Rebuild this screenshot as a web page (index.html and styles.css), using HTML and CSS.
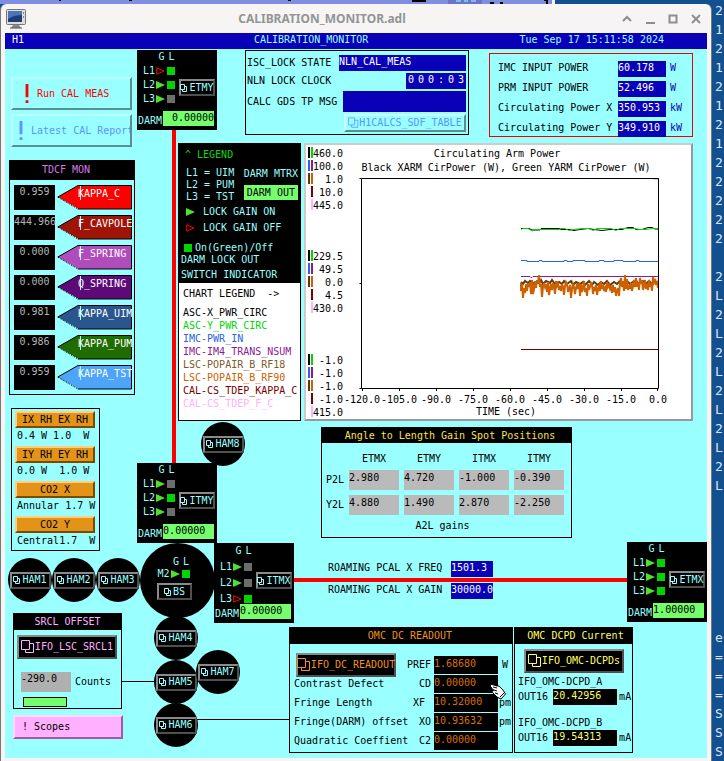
FILE: index.html
```html
<!DOCTYPE html>
<html lang="en">
<head>
<meta charset="utf-8">
<title>CALIBRATION_MONITOR.adl</title>
<link rel="stylesheet" href="styles.css">
</head>
<body>
<svg class="defs" aria-hidden="true">
  <symbol id="rel" viewBox="0 0 8 8"><path d="M.5.5h4v5h-4zM4.5 2.500h2v5h-4v-2" fill="none" stroke="currentColor"/></symbol>
  <symbol id="relbig" viewBox="0 0 14 14"><path d="M.5.5h8v9h-8zM8.500 3.500h4v9h-8v-3" fill="none" stroke="currentColor"/></symbol>
  <symbol id="on" viewBox="0 0 9 8"><path d="M0 0l9 4-9 4z" fill="#50e030"/></symbol>
  <symbol id="off" viewBox="0 0 9 8"><path d="M.7.8L8 4 .7 7.200z" fill="none" stroke="red"/></symbol>
  <symbol id="flag" viewBox="0 0 75 25"><path d="M.8 12L21 .5h53.500v23.500H21z" fill="currentColor" stroke="#000"/><path d="M2 13l19 11" stroke="#9ff" stroke-dasharray="2 1" fill="none"/><path d="M23.500 1v14" stroke="#9ff" stroke-width="1"/></symbol>
  <symbol id="bang" viewBox="0 0 4 20"><path d="M.5 0h3v14h-3zM.5 17h3v3h-3z" fill="currentColor"/></symbol>
</svg>
<div class="desktop">
  <div class="behind"><svg width="555" height="4" viewBox="0 0 555 4"><path d="M448 0h34v4h-34z" fill="#6a74cc"/><path d="M456 1h5M464 1h4M471 1h5" stroke="#99ffff"/><path d="M59 0h2M129 0h3M288 0h3M412 1h14M490 3h4M500 3h3M544 0h3v4" stroke="#000" stroke-width="2" fill="none"/></svg></div>
  <div class="window">
    <header class="titlebar">
      <svg class="app-icon" width="20" height="20" viewBox="0 0 20 20"><rect x=".5" y=".5" width="19" height="15" rx="1" fill="#dcdcd8" stroke="#777"/><rect x="2" y="2" width="14" height="11" fill="#1f3c78"/><path d="M2 2h14v4Q8 6 2 10z" fill="#4d74b4"/><path d="M17.500 3v2M17.500 7v2" stroke="#888"/><path d="M7 16h6l2 3H5z" fill="#888"/><path d="M4 19h12" stroke="#555"/></svg>
      <h1 class="title">CALIBRATION_MONITOR.adl</h1>
      <div class="win-buttons">
        <button aria-label="Shade"><svg width="10" height="10" viewBox="0 0 10 10"><path d="M1 7l4-4 4 4" /></svg></button>
        <button aria-label="Minimize"><svg width="10" height="10" viewBox="0 0 10 10"><path d="M1 9h9"/></svg></button>
        <button aria-label="Maximize"><svg width="10" height="10" viewBox="0 0 10 10"><path d="M1.500 1.500h7v7h-7z"/></svg></button>
        <button aria-label="Close"><svg width="10" height="10" viewBox="0 0 10 10"><path d="M1 1l8 8M9 1l-8 8"/></svg></button>
      </div>
    </header>
    <div class="headline"><span>H1</span><span>CALIBRATION_MONITOR</span><span>Tue Sep 17 15:11:58 2024</span></div>

    <main class="stage">
      <div class="beam beam-y"></div>
      <div class="beam beam-x"></div>
      <div class="wire wire-srcl"></div>
      <div class="wire wire-omc"></div>

      <div class="left">
        <button class="shell run"><svg width="4" height="19"><use href="#bang"/></svg>Run CAL MEAS</button>
        <button class="shell report"><svg width="4" height="19"><use href="#bang"/></svg>Latest CAL Report</button>

        <section class="panel tdcf">
          <h2 class="bar">TDCF MON</h2>
          <div class="kappas">
            <output>0.959</output><button class="flag red"><svg><use href="#flag"/></svg><span>KAPPA_C</span></button>
            <output>444.966</output><button class="flag brick"><svg><use href="#flag"/></svg><span>F_CAVPOLE</span></button>
            <output>0.000</output><button class="flag orchid"><svg><use href="#flag"/></svg><span>F_SPRING</span></button>
            <output>0.000</output><button class="flag violet"><svg><use href="#flag"/></svg><span>Q_SPRING</span></button>
            <output>0.981</output><button class="flag navy"><svg><use href="#flag"/></svg><span>KAPPA_UIM</span></button>
            <output>0.986</output><button class="flag forest"><svg><use href="#flag"/></svg><span>KAPPA_PUM</span></button>
            <output>0.959</output><button class="flag sky"><svg><use href="#flag"/></svg><span>KAPPA_TST</span></button>
          </div>
        </section>

        <section class="panel heaters">
          <button class="amber">IX RH EX RH</button><p>0.4 W 1.0  W</p>
          <button class="amber">IY RH EY RH</button><p>0.0 W  1.0 W</p>
          <button class="amber">CO2 X</button><p>Annular 1.7 W</p>
          <button class="amber">CO2 Y</button><p>Central1.7  W</p>
        </section>

        <section class="panel srcl">
          <h2 class="bar">SRCL OFFSET</h2>
          <button class="rel big pink"><svg><use href="#relbig"/></svg>IFO_LSC_SRCL1</button>
          <label class="offset"><input value="-290.0">Counts</label>
          <div class="meter"></div>
        </section>
        <button class="scopes">! Scopes</button>
      </div>

      <div class="right">
        <div class="row-top">
          <section class="panel lock">
            <span>ISC_LOCK STATE</span><output class="state">NLN_CAL_MEAS</output>
            <span>NLN LOCK CLOCK</span><output class="clock"><i>0</i><i>0</i><i>0</i><i>:</i><i>0</i><i>3</i></output>
            <span>CALC GDS TP MSG</span><output class="msg"></output>
            <button class="sdf"><svg><use href="#relbig"/></svg>H1CALCS_SDF_TABLE</button>
          </section>
          <section class="panel power">
            <span>IMC INPUT POWER</span><output>60.178</output><span class="unit">W</span>
            <span>PRM INPUT POWER</span><output>52.496</output><span class="unit">W</span>
            <span>Circulating Power X</span><output>350.953</output><span class="unit">kW</span>
            <span>Circulating Power Y</span><output>349.910</output><span class="unit">kW</span>
          </section>
        </div>

        <div class="row-chart">
          <section class="panel legend">
            <div class="legend-dark">
              <h2>^ LEGEND</h2>
              <div class="stages">
                <ul><li>L1 = UIM</li><li>L2 = PUM</li><li>L3 = TST</li></ul>
                <div class="darm-buttons"><button>DARM MTRX</button><button class="out">DARM OUT</button></div>
              </div>
              <p class="key"><svg><use href="#on"/></svg> LOCK GAIN ON</p>
              <p class="key"><svg><use href="#off"/></svg> LOCK GAIN OFF</p>
              <p class="switch"><i class="lamp lit"></i>On(Green)/Off</p>
              <p class="note">DARM LOCK OUT</p>
              <p class="note last">SWITCH INDICATOR</p>
            </div>
            <div class="legend-light">
              <h3>CHART LEGEND  -&gt;</h3>
              <ul>
                <li class="c-black">ASC-X_PWR_CIRC</li><li class="c-green">ASC-Y_PWR_CIRC</li><li class="c-blue">IMC-PWR_IN</li><li class="c-purple">IMC-IM4_TRANS_NSUM</li><li class="c-brown">LSC-POPAIR_B_RF18</li><li class="c-orange">LSC-POPAIR_B_RF90</li><li class="c-maroon">CAL-CS_TDEP_KAPPA_C</li><li class="c-pink">CAL-CS_TDEP_F_C</li>
              </ul>
            </div>
          </section>
          <figure class="chart">
            <svg viewBox="0 0 385 274" role="img" aria-label="Circulating Arm Power strip chart">
              <g text-anchor="middle"><text x="191" y="12">Circulating Arm Power</text><text x="200" y="26">Black XARM CirPower (W), Green YARM CirPower (W)</text><text x="200" y="270">TIME (sec)</text></g>
              <defs><clipPath id="plot"><path d="M56 34h297v210H56z"/></clipPath><g id="swatches"><path d="M2 0h2v11h-2z" fill="#000"/><path d="M5 0h2v11h-2z" fill="#00d800"/><path d="M2 13h2v11h-2z" fill="#2a63e4"/><path d="M5 13h2v11h-2z" fill="#8b1a96"/><path d="M2 26h2v11h-2z" fill="#5b3a11"/><path d="M5 26h2v11h-2z" fill="#cd6100"/><path d="M5 39h2v11h-2z" fill="#780000"/><path d="M5 52h2v11h-2z" fill="#ffb0ff"/></g></defs>
              <use href="#swatches" y="2"/><use href="#swatches" y="105"/><use href="#swatches" y="209"/>
              <g text-anchor="end">
                <text x="37" y="12">460.0</text><text x="37" y="25">100.0</text><text x="37" y="38">1.0</text><text x="37" y="51">10.0</text><text x="37" y="64">445.0</text>
                <text x="37" y="115">229.5</text><text x="37" y="128">49.5</text><text x="37" y="141">0.0</text><text x="37" y="154">4.5</text><text x="37" y="167">430.0</text>
                <text x="37" y="219">-1.0</text><text x="37" y="232">-1.0</text><text x="37" y="245">-1.0</text><text x="37" y="258">-1.0</text><text x="37" y="271">415.0</text>
              </g>
              <g text-anchor="middle"><text x="56" y="258">-120.0</text><text x="93" y="258">-105.0</text><text x="130" y="258">-90.0</text><text x="167" y="258">-75.0</text><text x="204" y="258">-60.0</text><text x="241" y="258">-45.0</text><text x="278" y="258">-30.0</text><text x="315" y="258">-15.0</text><text x="352" y="258">0.0</text></g>
              <g fill="none" clip-path="url(#plot)">
                <path d="M347 34.500h5" stroke="#ffb0ff"/>
                <path d="M215 83.500h8l3 1.500h8l1-1.500h18l2 1h8l5 1 6-1 8-1 6 1 8 1 8-1h12l6-2h5l3 2h6l6-2h4l3 1.500h10" stroke="#000"/>
                <path d="M215 84.500l2-1h5l4 2.500 3-1.500h24l2-1h4l4 2 4-1 10-1h6l4 2 4-2h14l5 2 4-2h14l6 1h6l6-1h12" stroke="#00d800"/>
                <path d="M215 115.500h6v1h12v-1h3v1h22v-1h3v1h6v-1h12v1h14v-1h5v1h10v-1h9v1h13v-1h3v1h19" stroke="#2a63e4"/>
                <path d="M215 131.500h9l1 1h1l1-1h125" stroke="#8b1a96"/>
                <path d="M215 137l2 2 2-3 3 2 2-2 3 3 2-2 4 1 2-3 2 4 3-3 4 2 2-3 3 4 4-2 3 2 2-3 3 3 4-3 2 4 3-3 4 2 3-2 2 3 4-4 3 4 2-3 4 3 3-3 3 2 3-3 3 4 4-3 3 2 3-3 3 3 4-3 3 3 3-2 3-1 3 3 4-3 3 3 3-3 3 3" stroke="#5b3a11" stroke-width="2"/>
                <path d="M215 138v8l1-7 1 14 1-10 1 5 1-9 1 7 1-8 1 4 1-5 1 12 1-3v-11l1 14 1-5 1-8 1 7 1-8 1 3 1-8 1 12 1-3 1 13 1-10 1-4 1 4 1-3 1 8 1-10 1 13 1-6 1-5 1 6 1-7 1 3 1 8 1-13 1 5 1-2 1 6 1-4 1 5 1-7 1 3 1 8 1-9 1-4 1 2 1 8 1-3 1-4 1 13 1-9 1-5 1 3 1 7 1-6 1-4 1 5 1-6 1 13 1-12 1 8 1-4 1-7 1 11 1-4 1 8 1-12 1 6 1-3 1-4 1 2 1 9 1-7 1 4 1-6 1 10 1-6 1-3 1 5 1-10 1 8 1-4 1 6 1-3 1 4 1-10 1 5 1-2 1 4 1-2 1 6 1-8 1 7 1-5 1 9 1-5 1-3 1 8 1-13 1-5 1 9 1-6 1 10 1-16 1 14 1-10 1 11 1-5 1 4 1-6 1 8 1-5 1-6 1 7 1-9 1 9 1-5 1 8 1-12 1 6 1-4 1 10 1-4 1-6 1 9 1-5 1 6 1-10 1 7 1-4 1 8 1-14 1 5 1-3 1 6 1-4 1 7 1-11 1 9" stroke="#cd6100" stroke-width="2"/>
                <path d="M215 204.500h137" stroke="#780000"/>
              </g>
              <path d="M55.500 33.500h297v210h-297zM53.500 33.500h2M53.500 138.500h2M53.500 243.500h2M56.500 243v3M93.500 243v3M130.500 243v3M167.500 243v3M204.500 243v3M241.500 243v3M278.500 243v3M315.500 243v3M351.500 243v3" stroke="#000" fill="none"/>
            </svg>
          </figure>
        </div>

        <section class="panel a2l">
          <h2 class="bar">Angle to Length Gain Spot Positions</h2>
          <table>
            <tr><td></td><th>ETMX</th><th>ETMY</th><th>ITMX</th><th>ITMY</th></tr>
            <tr><th>P2L</th><td><input aria-label="P2L ETMX" value="2.980"></td><td><input aria-label="P2L ETMY" value="4.720"></td><td><input aria-label="P2L ITMX" value="-1.000"></td><td><input aria-label="P2L ITMY" value="-0.390"></td></tr>
            <tr><th>Y2L</th><td><input aria-label="Y2L ETMX" value="4.880"></td><td><input aria-label="Y2L ETMY" value="1.490"></td><td><input aria-label="Y2L ITMX" value="2.870"></td><td><input aria-label="Y2L ITMY" value="-2.250"></td></tr>
          </table>
          <p>A2L gains</p>
        </section>

        <section class="roaming">
          <span>ROAMING PCAL X FREQ</span><output>1501.3</output>
          <span>ROAMING PCAL X GAIN</span><output>30000.0</output>
        </section>

        <div class="row-omc">
          <section class="panel omc">
            <h2 class="bar">OMC DC READOUT</h2>
            <div class="omc-grid">
              <button class="rel big orange"><svg><use href="#relbig"/></svg>IFO_DC_READOUT</button><label for="pref">PREF</label><input id="pref" value="1.68680"><span class="watt">W</span>
              <span>Contrast Defect</span><label for="cd">CD</label><input id="cd" value="0.00000"><span></span>
              <span>Fringe Length</span><label for="xf" class="xf">XF</label><input id="xf" value="10.32000"><span>pm</span>
              <span>Fringe(DARM) offset</span><label for="xo">XO</label><input id="xo" value="10.93632"><span>pm</span>
              <span>Quadratic Coeffient</span><label for="c2">C2</label><input id="c2" value="0.00000"><span></span>
            </div>
          </section>
          <section class="panel dcpd">
            <h2 class="bar">OMC DCPD Current</h2>
            <button class="rel big yellow"><svg><use href="#relbig"/></svg>IFO_OMC-DCPDs</button>
            <h3>IFO_OMC-DCPD_A</h3>
            <p>OUT16<output>20.42956</output>mA</p>
            <h3 class="second">IFO_OMC-DCPD_B</h3>
            <p>OUT16<output>19.54313</output>mA</p>
          </section>
        </div>
      </div>

      <div class="optic etmy">
        <div class="optic-top">
          <div class="lamps"><b></b><b>G</b><b>L</b>
            <b>L1</b><svg><use href="#off"/></svg><i class="lamp lit"></i>
            <b>L2</b><svg><use href="#on"/></svg><i class="lamp lit"></i>
            <b>L3</b><svg><use href="#on"/></svg><i class="lamp"></i></div>
          <button class="rel"><svg><use href="#rel"/></svg>ETMY</button>
        </div>
        <p>DARM<output class="end">0.00000</output></p>
      </div>
      <div class="optic itmy">
        <div class="optic-top">
          <div class="lamps"><b></b><b>G</b><b>L</b>
            <b>L1</b><svg><use href="#on"/></svg><i class="lamp"></i>
            <b>L2</b><svg><use href="#on"/></svg><i class="lamp lit"></i>
            <b>L3</b><svg><use href="#on"/></svg><i class="lamp"></i></div>
          <button class="rel"><svg><use href="#rel"/></svg>ITMY</button>
        </div>
        <p>DARM<output>0.00000</output></p>
      </div>
      <div class="ham bs">
        <div class="lamps"><b></b><b>G</b><b>L</b>
          <b>M2</b><svg><use href="#on"/></svg><i class="lamp lit"></i></div>
        <button class="rel"><svg><use href="#rel"/></svg>BS</button>
      </div>
      <div class="optic itmx">
        <div class="optic-top">
          <div class="lamps"><b></b><b>G</b><b>L</b>
            <b>L1</b><svg><use href="#on"/></svg><i class="lamp"></i>
            <b>L2</b><svg><use href="#on"/></svg><i class="lamp"></i>
            <b>L3</b><svg><use href="#off"/></svg><i class="lamp lit"></i></div>
          <button class="rel"><svg><use href="#rel"/></svg>ITMX</button>
        </div>
        <p>DARM<output>0.00000</output></p>
      </div>
      <div class="optic etmx">
        <div class="optic-top">
          <div class="lamps"><b></b><b>G</b><b>L</b>
            <b>L1</b><svg><use href="#on"/></svg><i class="lamp lit"></i>
            <b>L2</b><svg><use href="#on"/></svg><i class="lamp lit"></i>
            <b>L3</b><svg><use href="#on"/></svg><i class="lamp lit"></i></div>
          <button class="rel"><svg><use href="#rel"/></svg>ETMX</button>
        </div>
        <p>DARM<output>1.00000</output></p>
      </div>
      <div class="ham ham1"><button class="rel"><svg><use href="#rel"/></svg>HAM1</button></div>
      <div class="ham ham2"><button class="rel"><svg><use href="#rel"/></svg>HAM2</button></div>
      <div class="ham ham3"><button class="rel"><svg><use href="#rel"/></svg>HAM3</button></div>
      <div class="ham ham4"><button class="rel"><svg><use href="#rel"/></svg>HAM4</button></div>
      <div class="ham ham5"><button class="rel"><svg><use href="#rel"/></svg>HAM5</button></div>
      <div class="ham ham6"><button class="rel"><svg><use href="#rel"/></svg>HAM6</button></div>
      <div class="ham ham7"><button class="rel"><svg><use href="#rel"/></svg>HAM7</button></div>
      <div class="ham ham8"><button class="rel"><svg><use href="#rel"/></svg>HAM8</button></div>
      <svg class="pointer" width="16" height="16" viewBox="0 0 16 16"><path d="M.5 1.500Q1 0 3 .8L7 2h2l4 4 2.500 4-4.500 5-4-2-2.500-2.500L3 9l-1-1.500 2-1.500-2-.5V4L.5 3z" fill="#fff" stroke="#000"/><path d="M3 3l4 1M4 6l3 1M5 9l3 1M10 13l4-4" stroke="#000"/></svg>
    </main>
  </div>
  <pre class="terminal">2
1
2
1
2
1
2
1
2
2
2
2
2

2
L
2
L
2
L
2
L
2
L
2
L







e
=
=
=
S
S
S</pre>
</div>
</body>
</html>
```
FILE: styles.css
```css
* { box-sizing: border-box; margin: 0; padding: 0; }
:root { --cyan: #99ffff; --blue: #0a00b8; --lime: #75ff6c; --grey: #bababa; }
body { background: #12508f; font: 10px/12px "DejaVu Sans Mono", monospace; color: #000; }
button, input { font: inherit; color: inherit; border: 0; border-radius: 0; background: none; min-width: 0; }
button { display: flex; align-items: center; white-space: nowrap; }
h1, h2, h3, b, i, th { font: inherit; }
ul { list-style: none; }
output { display: block; white-space: nowrap; }
.defs { position: absolute; width: 0; height: 0; }

.desktop { display: grid; grid-template-columns: minmax(0, 1fr) 12px; grid-template-rows: 4px auto; min-height: 100vh; overflow: hidden; }
.behind { width: 78%; background: #7f8ee2; border-right: 3px solid #f6f5f4; overflow: hidden; }
.behind svg { display: block; }
.terminal { grid-column: 2; grid-row: 1 / 3; padding: 1px 0 0 3px; font: 13px/19px "DejaVu Sans Mono", monospace; color: #dce6f0; overflow: hidden; height: 100vh; }

.window { grid-column: 1; grid-row: 2; background: #f6f5f4; border: 1px solid #777; border-width: 0 1px; border-radius: 6px 6px 0 0; padding: 0 4px 3px; min-width: 0; }
.titlebar { display: grid; grid-template-columns: 22px 1fr 90px; align-items: center; height: 29px; }
.title { font: bold 12px/16px "Noto Sans", sans-serif; color: #929595; text-align: center; }
.app-icon { margin-left: 1px; }
.win-buttons { display: flex; gap: 13px; justify-content: flex-end; padding-right: 6px; }
.win-buttons path { fill: none; stroke: #8b8e8f; stroke-width: 2; }

.headline { display: grid; grid-template-columns: 242px 1fr auto; padding: 0 43px 0 7px; height: 16px; line-height: 14px; background: var(--blue); color: var(--cyan); }
.headline span:first-child { color: #fff; }

.stage { position: relative; display: grid; grid-template-columns: 132px minmax(0, 1fr); background: var(--cyan); padding-bottom: 5px; }
.panel { border: 1px solid #000; }
.bar { background: #000; text-align: center; height: 17px; line-height: 15px; }

/* left column */
.left { padding: 28px 2px 0 4px; }
.shell { width: 121px; height: 33px; margin-left: 2px; gap: 8px; border: 2px solid; border-color: #bff #5a8f8f #5a8f8f #bff; overflow: hidden; }
.run { color: #f00; padding-left: 12px; }
.report { color: #5b95ff; padding-left: 6px; margin-top: 4px; }
.shell svg { flex: none; }
.tdcf { margin-top: 13px; padding-bottom: 4px; }
.tdcf .bar { height: 19px; line-height: 17px; color: #d878e8; padding-right: 12px; }
.kappas { display: grid; grid-template-columns: 41px 75px; column-gap: 2px; row-gap: 5px; padding: 5px 0 0 4px; }
.kappas output { background: #000; color: #b4b4b4; height: 25px; line-height: 14px; text-align: center; }
.flag { position: relative; height: 25px; align-items: flex-start; padding-left: 21px; overflow: hidden; }
.flag svg { position: absolute; left: 0; top: 0; width: 75px; height: 25px; }
.flag span { position: relative; color: #fff; line-height: 18px; }
.red { color: #f00; } .brick { color: #a01408; } .orchid { color: #b04cbc; } .violet { color: #5d0a78; }
.navy { color: #2a568f; } .forest { color: #216c00; } .sky { color: #4ea4fb; }
.heaters { width: 89px; margin: 13px 0 0 2px; padding: 2px 3px 0; height: 143px; }
.amber { width: 80px; height: 17px; justify-content: center; background: #e29318; border: 2px solid; border-color: #ffcf80 #7a4a00 #7a4a00 #ffcf80; }
.heaters p { height: 18px; line-height: 16px; white-space: pre; padding-left: 2px; }
.srcl { width: 109px; height: 96px; margin: 62px 0 0 4px; }
.srcl .bar { height: 16px; color: #ffb0ff; }
.srcl .rel { margin: 5px 0 0 3px; }
.offset { display: flex; gap: 4px; margin: 13px 0 0 7px; line-height: 20px; }
.offset input { width: 50px; height: 20px; background: #b0b0b0; padding-bottom: 6px; }
.meter { width: 44px; height: 10px; margin: 5px 0 0 9px; background: var(--lime); border: 1px solid #000; }
.scopes { width: 110px; height: 24px; margin: 6px 0 0 4px; padding-left: 7px; background: #ffb0ff; border: 2px solid; border-color: #ffd8ff #a05ca0 #a05ca0 #ffd8ff; }

/* related-display buttons */
.rel { height: 17px; gap: 1px; padding: 0; justify-content: center; background: #000; color: var(--cyan); border: 2px solid; border-color: #8a8a8a #505050 #505050 #8a8a8a; }
.rel svg { width: 8px; height: 8px; flex: none; }
.big { width: 100px; height: 24px; gap: 0; }
.big svg, .sdf svg { width: 14px; height: 14px; flex: none; }
.rel.big svg { width: 14px; height: 14px; }
.rel.pink { color: #ffb0ff; } .rel.orange { color: #f0901e; } .rel.yellow { color: #ffff60; }

/* right column */
.right { padding-right: 14px; }
.row-top { display: flex; gap: 20px; margin: 1px 0 0 108px; height: 93px; align-items: flex-start; }
.lock { flex: 1; display: grid; grid-template-columns: 93px 1fr; grid-template-rows: 16px 16px 21px 18px; row-gap: 2px; align-items: center; padding: 4px 2px 3px 1px; height: 85px; }
.lock span { white-space: nowrap; }
.lock output, .power output, .roaming output { background: var(--blue); color: #fff; height: 16px; line-height: 14px; }
.lock .state { margin-left: -1px; }
.lock .clock { width: 60px; justify-self: end; display: flex; justify-content: space-around; }
.lock .msg { height: 21px; margin-left: 3px; }
.sdf { grid-column: 2; width: 122px; height: 18px; justify-self: end; justify-content: center; color: #5b95ff; border: 2px solid; border-color: #cff #5a8f8f #5a8f8f #cff; }
.sdf svg { width: 11px; height: 12px; }
.power { width: 204px; margin-top: 3px; padding: 7px 0 0 8px; height: 84px; border-color: #e00; display: grid; grid-template-columns: 120px 48px 1fr; grid-auto-rows: 16px; row-gap: 4px; column-gap: 0; line-height: 14px; }
.power .unit { color: var(--blue); padding-left: 4px; }

.row-chart { display: flex; gap: 3px; margin-left: 41px; align-items: stretch; }
.legend { width: 123px; flex: none; display: flex; flex-direction: column; }
.legend-dark { background: #000; color: var(--cyan); height: 139px; padding: 4px 2px 0; }
.legend h2 { color: #00d800; padding-left: 4px; line-height: 13px; }
.stages { display: flex; justify-content: space-between; padding: 6px 0 0 5px; }
.darm-buttons button { height: 14px; }
.darm-buttons .out { background: var(--lime); color: #000; width: 54px; padding-left: 3px; height: 15px; margin-top: 4px; }
.key { display: flex; align-items: center; gap: 8px; padding-left: 5px; height: 16px; }
.key svg, .lamps svg { width: 9px; height: 8px; }
.stages + .key { margin-top: 1px; }
.switch { display: flex; align-items: center; gap: 3px; padding-left: 3px; margin-top: 6px; }
.note { line-height: 12px; }
.note.last { margin-top: 3px; }
.lamp { display: block; width: 8px; height: 8px; background: #6c6c6c; }
.lamp.lit { background: #00d400; }
.legend-light { background: #fff; flex: 1; padding: 4px 0 0 4px; line-height: 13px; }
.legend-light h3 { white-space: pre; }
.legend-light ul { margin-top: 6px; }
.legend-light li { white-space: nowrap; }
.c-green { color: #00d800; } .c-blue { color: #2a63e4; } .c-purple { color: #8b1a96; } .c-brown { color: #7d5a29; }
.c-orange { color: #cd6100; } .c-maroon { color: #780000; } .c-pink { color: #ffb0ff; }
.chart { flex: 1; min-width: 0; background: #fff; border: 2px solid; border-color: #ccc #999 #999 #ccc; }
.chart svg { display: block; width: 100%; height: auto; }
.chart text { fill: #000; }

.a2l { width: 251px; height: 111px; margin: 6px 0 0 184px; }
.a2l .bar { height: 15px; line-height: 15px; color: #ffe040; padding-left: 7px; }
.a2l table { border-spacing: 5px; margin-top: 5px; margin-left: -1px; }
.a2l td, .a2l th { padding: 0; }
.a2l tr:first-child th { height: 10px; }
.a2l input { display: block; width: 50px; height: 20px; background: var(--grey); padding-bottom: 6px; }
.a2l p { text-align: center; padding-right: 8px; }

.roaming { display: grid; grid-template-columns: 123px 42px; row-gap: 6px; margin: 23px 0 0 191px; line-height: 14px; }

.row-omc { display: flex; gap: 1px; margin: 28px 0 0 152px; }
.omc, .dcpd { height: 126px; }
.omc { width: 224px; }
.omc .bar { height: 16px; color: #f0901e; padding-left: 18px; }
.omc-grid { display: grid; grid-template-columns: 114px 26px 64px 1fr; grid-auto-rows: 18px; row-gap: 1px; align-items: center; padding: 12px 0 0 4px; white-space: nowrap; }
.omc-grid .rel { margin-left: 2px; }
.omc-grid label { justify-self: end; padding-right: 3px; }
.omc-grid .xf { padding-right: 9px; }
.omc-grid input { width: 64px; height: 18px; background: #000; color: #d87000; padding-bottom: 4px; }
.omc-grid input + span { padding-left: 1px; }
.omc-grid input + .watt { padding-left: 4px; }
.dcpd { width: 119px; }
.dcpd .bar { height: 16px; color: #ffff60; padding-left: 4px; }
.dcpd .rel { margin: 5px 0 0 9px; }
.dcpd h3 { padding: 3px 0 0 3px; }
.dcpd h3.second { margin-top: 9px; }
.dcpd p { display: flex; gap: 2px; padding: 1px 0 0 3px; line-height: 16px; white-space: nowrap; }
.dcpd output { width: 64px; margin-left: 3px; background: #000; color: #ffff60; line-height: 14px; }

/* interferometer layout */
.beam, .wire, .optic, .ham, .pointer { position: absolute; }
.beam { background: #f00; }
.beam-y { left: 167px; top: 80px; width: 4px; height: 335px; }
.beam-x { left: 288px; right: 78px; top: 529px; height: 4px; }
.wire { height: 1px; background: #000; }
.wire-srcl { left: 117px; top: 632px; width: 34px; }
.wire-omc { left: 192px; top: 670px; width: 93px; }
.optic { width: 80px; height: 80px; background: #000; color: var(--cyan); --row: 14px; }
.optic-top { display: flex; height: 61px; }
.lamps { display: grid; grid-template-columns: 14px 11px 9px; grid-auto-rows: var(--row, 14px); align-items: center; align-content: start; padding-left: 5px; }
.lamps b { text-align: center; }
.optic .rel { width: 36px; margin: 29px 0 0 3px; }
.optic p { display: flex; gap: 1px; padding-left: 1px; line-height: 20px; }
.optic output { flex: none; width: 51px; height: 15px; line-height: 14px; background: var(--lime); color: #000; }
.optic .end { text-align: right; }
.etmy { left: 132px; top: 1px; }
.itmy { left: 132px; top: 414px; }
.itmx { left: 209px; top: 494px; --row: 16px; }
.etmx { right: 0; top: 493px; }
.ham { width: 44px; height: 44px; border-radius: 50%; background: #000; color: var(--cyan); display: flex; flex-direction: column; align-items: center; justify-content: center; }
.ham .rel { width: 41px; flex: none; }
.bs { width: 75px; height: 75px; left: 135px; top: 494px; justify-content: flex-start; padding-top: 13px; }
.bs .lamps { grid-auto-rows: 12px; padding: 0 8px 0 0; }
.bs .rel { width: 35px; margin-top: 3px; margin-right: 6px; }
.ham1 { left: 3px; top: 509px; }
.ham2 { left: 47px; top: 509px; }
.ham3 { left: 91px; top: 509px; }
.ham4 { left: 149px; top: 567px; }
.ham5 { left: 149px; top: 611px; }
.ham6 { left: 149px; top: 654px; }
.ham7 { left: 191px; top: 601px; }
.ham8 { left: 196px; top: 373px; }
.pointer { left: 485px; top: 635px; }
```
